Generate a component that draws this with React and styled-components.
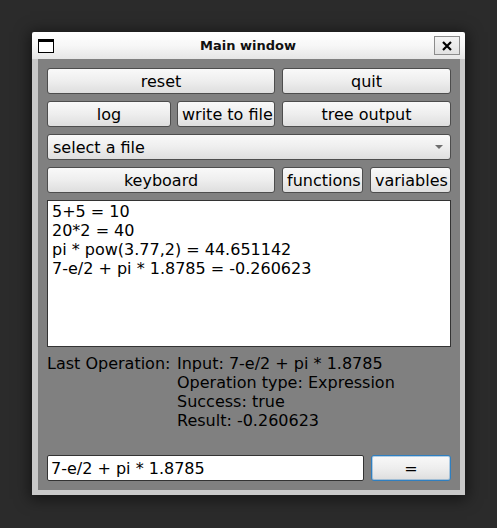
import React from 'react';
import styled, { createGlobalStyle } from 'styled-components';

const GlobalStyle = createGlobalStyle`
  html, body {
    margin: 0;
    padding: 0;
    background: #2b2b2b;
  }
  body {
    width: 497px;
    height: 528px;
    overflow: hidden;
    font-family: "DejaVu Sans", "Liberation Sans", sans-serif;
  }
`;

const Desktop = styled.div`
  padding: 32px 0 0 32px;
`;

const Window = styled.div`
  width: 433px;
  height: 463px;
  display: flex;
  flex-direction: column;
  box-shadow: 0 2px 14px 2px rgba(0, 0, 0, 0.55);
`;

const TitleBar = styled.div`
  height: 27px;
  display: flex;
  align-items: center;
  padding: 0 6px 0 6px;
  background: linear-gradient(to bottom, #ffffff 0%, #f7f7f7 50%, #e6e6e6 100%);
  border-radius: 2px 2px 0 0;
`;

const WindowIcon = styled.div`
  width: 14px;
  height: 10px;
  border: 1px solid #000;
  border-top-width: 3px;
  background: #fff;
  margin-top: 1px;
`;

const Title = styled.div`
  flex: 1;
  text-align: center;
  font-size: 13px;
  font-weight: bold;
  color: #111;
  padding-left: 8px;
`;

const CloseButton = styled.div`
  width: 24px;
  height: 17px;
  border: 1px solid #8c8c8c;
  background: linear-gradient(to bottom, #f4f4f4, #e2e2e2);
  display: flex;
  align-items: center;
  justify-content: center;
  margin-right: -1px;
`;

const Frame = styled.div`
  flex: 1;
  display: flex;
  background: #c9c9c9;
  padding: 0 5px 5px 6px;
`;

const Content = styled.div`
  flex: 1;
  background: #808080;
  padding: 9px 9px 9px 9px;
  display: flex;
  flex-direction: column;
  gap: 7px;
`;

const Grid = styled.div`
  display: grid;
  grid-template-columns: ${p => p.$cols};
  gap: ${p => p.$gap || 7}px;
`;

const Button = styled.button`
  height: 26px;
  margin: 0;
  padding: 0 4px;
  font-family: "DejaVu Sans", "Liberation Sans", sans-serif;
  font-size: 16px;
  color: #000;
  white-space: nowrap;
  border: 1px solid ${p => (p.$focus ? '#2f7fc0' : '#4d4d4d')};
  border-radius: 3px;
  background: linear-gradient(to bottom, #f9f9f9 0%, #eeeeee 50%, #dedede 100%);
  box-shadow: ${p => (p.$focus ? 'inset 0 0 0 1px rgba(47,127,192,0.35)' : 'none')};
  overflow: hidden;
`;

const Combo = styled.div`
  height: 26px;
  box-sizing: border-box;
  border: 1px solid #4d4d4d;
  border-radius: 3px;
  background: linear-gradient(to bottom, #f9f9f9 0%, #eeeeee 50%, #dedede 100%);
  display: flex;
  align-items: center;
  padding: 0 7px 0 5px;
  font-size: 16px;
  color: #000;
`;

const ComboText = styled.span`
  flex: 1;
`;

const Arrow = styled.span`
  width: 0;
  height: 0;
  border-left: 4px solid transparent;
  border-right: 4px solid transparent;
  border-top: 4px solid #6e6e6e;
`;

const Output = styled.div`
  height: 147px;
  box-sizing: border-box;
  background: #fff;
  border: 1px solid #333;
  padding: 1px 4px;
  font-size: 16px;
  line-height: 19px;
  color: #000;
`;

const Status = styled.div`
  flex: 1;
  display: grid;
  grid-template-columns: 130px 1fr;
  align-content: start;
  font-size: 16px;
  line-height: 19px;
  color: #000;
`;

const StatusLines = styled.div`
  display: flex;
  flex-direction: column;
`;

const InputRow = styled.div`
  display: grid;
  grid-template-columns: 317px 80px;
  gap: 7px;
`;

const Input = styled.input`
  height: 26px;
  box-sizing: border-box;
  margin: 0;
  border: 1px solid #333;
  border-radius: 2px;
  padding: 0 3px;
  font-family: "DejaVu Sans", "Liberation Sans", sans-serif;
  font-size: 16px;
  color: #000;
  background: #fff;
  outline: none;
`;

const lines = [
  '5+5 = 10',
  '20*2 = 40',
  'pi * pow(3.77,2) = 44.651142',
  '7-e/2 + pi * 1.8785 = -0.260623',
];

const details = [
  'Input: 7-e/2 + pi * 1.8785',
  'Operation type: Expression',
  'Success: true',
  'Result: -0.260623',
];

export default function App() {
  return (
    <>
      <GlobalStyle />
      <Desktop>
        <Window>
          <TitleBar>
            <WindowIcon />
            <Title>Main window</Title>
            <CloseButton>
              <svg width="12" height="12" viewBox="0 0 12 12">
                <path d="M2 2 L10 10 M10 2 L2 10" stroke="#000" strokeWidth="2.2" />
              </svg>
            </CloseButton>
          </TitleBar>
          <Frame>
            <Content>
              <Grid $cols="228px 169px">
                <Button>reset</Button>
                <Button>quit</Button>
              </Grid>
              <Grid $cols="228px 169px">
                <Grid $cols="124px 98px" $gap={6}>
                  <Button>log</Button>
                  <Button>write to file</Button>
                </Grid>
                <Button>tree output</Button>
              </Grid>
              <Combo>
                <ComboText>select a file</ComboText>
                <Arrow />
              </Combo>
              <Grid $cols="228px 169px">
                <Button>keyboard</Button>
                <Grid $cols="81px 81px" $gap={7}>
                  <Button>functions</Button>
                  <Button>variables</Button>
                </Grid>
              </Grid>
              <Output>
                {lines.map(l => (
                  <div key={l}>{l}</div>
                ))}
              </Output>
              <Status>
                <div>Last Operation:</div>
                <StatusLines>
                  {details.map(d => (
                    <div key={d}>{d}</div>
                  ))}
                </StatusLines>
              </Status>
              <InputRow>
                <Input defaultValue="7-e/2 + pi * 1.8785" />
                <Button $focus>=</Button>
              </InputRow>
            </Content>
          </Frame>
        </Window>
      </Desktop>
    </>
  );
}
